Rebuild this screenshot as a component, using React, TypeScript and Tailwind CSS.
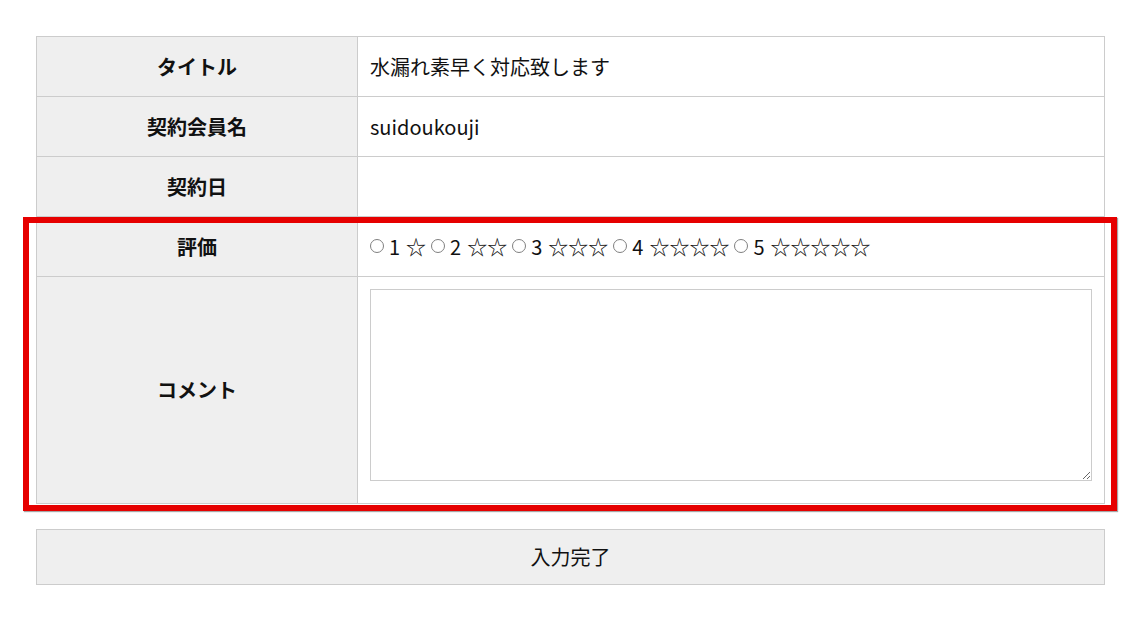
import React from "react";

const font = { fontFamily: '"Noto Sans CJK JP", "Noto Sans", sans-serif' };

export default function App() {
  return (
    <div className="w-[1125px] h-[627px] bg-white text-[20px] text-[#111]" style={font}>
      <div className="pt-[36px] pl-[36px]">
        <div className="relative w-[1069px]">
          <table className="w-[1069px] border-collapse table-fixed">
            <colgroup>
              <col className="w-[321px]" />
              <col />
            </colgroup>
            <tbody>
              <tr className="h-[60px]">
                <th className="border border-[#cccccc] bg-[#efefef] font-bold text-center">タイトル</th>
                <td className="border border-[#cccccc] px-[12px] text-left">水漏れ素早く対応致します</td>
              </tr>
              <tr className="h-[60px]">
                <th className="border border-[#cccccc] bg-[#efefef] font-bold text-center">契約会員名</th>
                <td className="border border-[#cccccc] px-[12px] text-left">suidoukouji</td>
              </tr>
              <tr className="h-[60px]">
                <th className="border border-[#cccccc] bg-[#efefef] font-bold text-center">契約日</th>
                <td className="border border-[#cccccc] px-[12px] text-left"></td>
              </tr>
              <tr className="h-[60px]">
                <th className="border border-[#cccccc] bg-[#efefef] font-bold text-center">評価</th>
                <td className="border border-[#cccccc] px-[12px] text-left">
                  <div className="flex items-center">
                    {[1, 2, 3, 4, 5].map((n) => (
                      <label key={n} className="flex items-center mr-[5px]">
                        <span className="block shrink-0 w-[14px] h-[14px] mr-[5px] mt-[-2px] rounded-full border border-[#808080] bg-white" />
                        <span>{n}</span>
                        <span className="ml-[6px]">{"☆".repeat(n)}</span>
                      </label>
                    ))}
                  </div>
                </td>
              </tr>
              <tr className="h-[227px]">
                <th className="border border-[#cccccc] bg-[#efefef] font-bold text-center">コメント</th>
                <td className="border border-[#cccccc] px-[12px] py-[12px] text-left align-top">
                  <textarea className="block w-[722px] h-[192px] border border-[#cccccc] bg-white resize-y outline-none" />
                </td>
              </tr>
            </tbody>
          </table>
          <div className="absolute left-[-13px] top-[181px] w-[1094px] h-[294px] border-[6px] border-[#e60000] shadow-[1px_1px_1px_rgba(0,0,0,0.35)] pointer-events-none" />
          <button className="mt-[25px] w-[1069px] h-[56px] border border-[#cccccc] bg-[#efefef] text-[20px] text-[#111]">入力完了</button>
        </div>
      </div>
    </div>
  );
}
